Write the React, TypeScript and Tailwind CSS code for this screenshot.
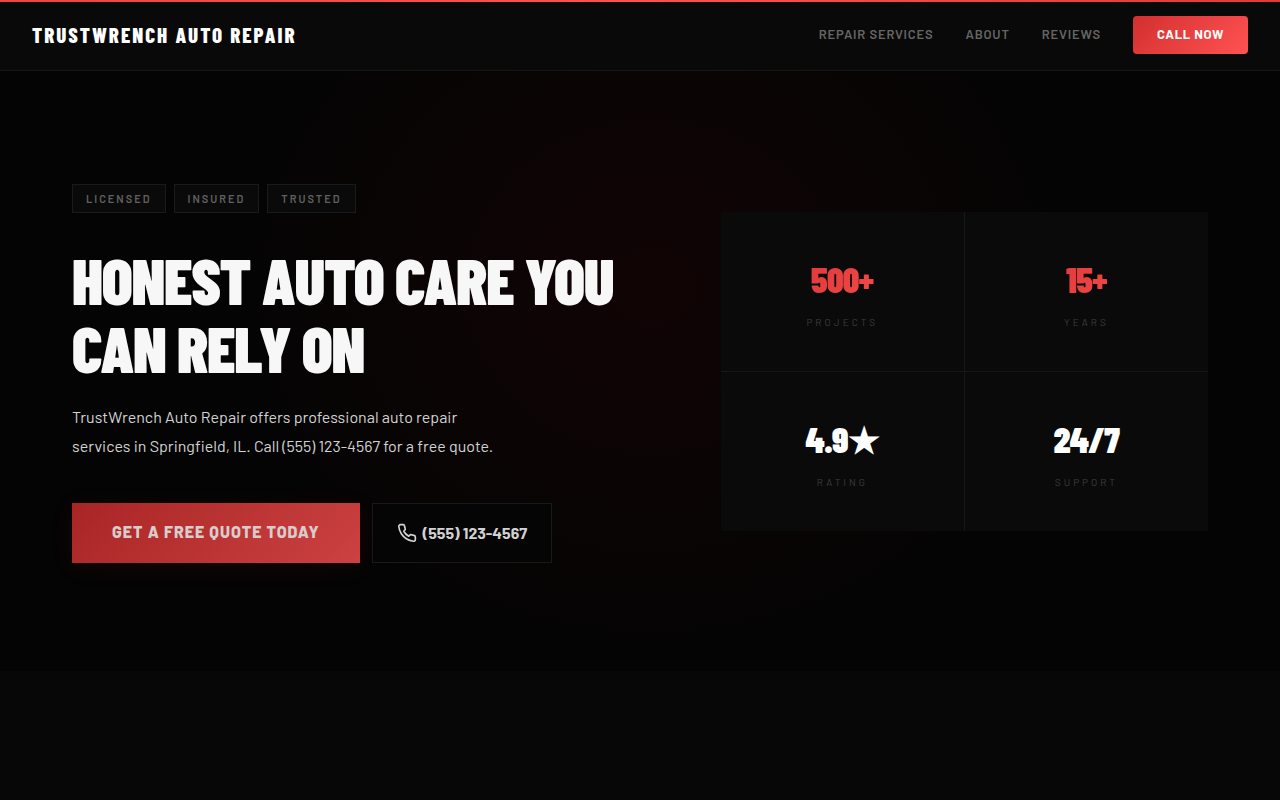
import { FiPhone } from 'react-icons/fi'

const navLinks = [
  { label: 'Repair Services', href: '#services' },
  { label: 'About', href: '#about' },
  { label: 'Reviews', href: '#reviews' }
]

const badges = ['Licensed', 'Insured', 'Trusted']

interface Stat {
  value: string
  label: string
  accent: boolean
}

const stats: Stat[] = [
  { value: '500+', label: 'Projects', accent: true },
  { value: '15+', label: 'Years', accent: true },
  { value: '4.9★', label: 'Rating', accent: false },
  { value: '24/7', label: 'Support', accent: false }
]

export default function App() {
  return (
    <div className="min-h-screen bg-[#070707] font-['Barlow','Roboto',sans-serif] text-white">
      <SiteHeader />
      <main>
        <Hero />
      </main>
    </div>
  )
}

function SiteHeader() {
  return (
    <header className="border-b border-[#161616] bg-[#090909]">
      <div className="h-0.5 bg-linear-to-r from-[#f04444] via-[#ff5050] to-[#e53935]" />
      <div className="flex items-center justify-between px-8 pt-[14px] pb-4">
        <a
          className="font-['Barlow_Condensed','Roboto_Condensed',sans-serif] text-[21px] font-extrabold uppercase tracking-[2px]"
          href="#top"
        >
          TrustWrench Auto Repair
        </a>
        <nav className="flex items-center gap-8">
          {navLinks.map((link) => (
            <a
              className="text-[13px] font-semibold uppercase tracking-[0.06em] text-[#666666]"
              href={link.href}
              key={link.href}
            >
              {link.label}
            </a>
          ))}
          <a
            className="rounded bg-linear-135 from-[#d32f2f] to-[#ff5252] px-6 pt-[9px] pb-[11px] text-[13px] leading-[18px] font-bold uppercase tracking-wider"
            href="tel:5551234567"
          >
            Call Now
          </a>
        </nav>
      </div>
    </header>
  )
}

function Hero() {
  return (
    <section className="flex min-h-[600px] items-center bg-[#040404] bg-[radial-gradient(ellipse_440px_390px_at_51%_36%,#110405_0%,#040404_100%)]">
      <div className="mx-auto grid w-full max-w-[1200px] grid-cols-[1.2fr_1fr] items-center gap-16 px-8">
        <div className="pt-1">
          <ul className="flex gap-2">
            {badges.map((badge) => (
              <li
                className="border border-[#1a1a1a] bg-[#0a0a0a] px-[13px] py-[6px] text-[11px] leading-[15px] font-semibold uppercase tracking-[2px] text-[#606060]"
                key={badge}
              >
                {badge}
              </li>
            ))}
          </ul>
          <h1 className="mt-[33px] font-['Barlow_Condensed','Roboto_Condensed',sans-serif] text-[64px] leading-[68px] font-black uppercase tracking-[-0.02em] text-[#f7f7f7]">
            Honest Auto Care You Can Rely On
          </h1>
          <p className="mt-5 max-w-[440px] text-base leading-[29px] text-[#d2d2d2]">
            TrustWrench Auto Repair offers professional auto repair services in Springfield, IL. Call (555) 123-4567 for
            a free quote.
          </p>
          <div className="mt-[43px] flex gap-3">
            <button
              className="h-[60px] bg-linear-135 from-[#a92525] to-[#cc4141] px-10 pb-0.5 text-base font-extrabold uppercase tracking-[1px] text-[#d9cccc] shadow-[0_4px_24px_rgba(229,57,53,0.08)]"
              type="button"
            >
              Get a Free Quote Today
            </button>
            <a
              className="flex h-[60px] items-center gap-1.5 border border-[#191919] bg-[#060506] px-6 text-base font-bold text-[#d2d2d2]"
              href="tel:5551234567"
            >
              <FiPhone aria-hidden="true" size={20} />
              (555) 123-4567
            </a>
          </div>
        </div>

        <dl className="grid grid-cols-2 gap-px bg-[#171717]">
          {stats.map((stat) => (
            <StatCell key={stat.label} stat={stat} />
          ))}
        </dl>
      </div>
    </section>
  )
}

function StatCell({ stat }: { stat: Stat }) {
  return (
    <div className="flex flex-col-reverse gap-2 bg-[#0a0a0a] px-8 py-10 text-center">
      <dt className="text-[10px] leading-[17px] uppercase tracking-[3px] text-[#3d3d3d]">{stat.label}</dt>
      <dd
        className={
          stat.accent
            ? "bg-linear-135 from-[#d32f2f] to-[#ff5252] bg-clip-text font-['Barlow_Condensed','Roboto_Condensed',sans-serif] text-4xl leading-[54px] font-black tracking-[-0.02em] text-transparent"
            : "font-['Barlow_Condensed','Roboto_Condensed',sans-serif] text-4xl leading-[54px] font-black tracking-[-0.02em] text-white"
        }
      >
        {stat.value}
      </dd>
    </div>
  )
}
